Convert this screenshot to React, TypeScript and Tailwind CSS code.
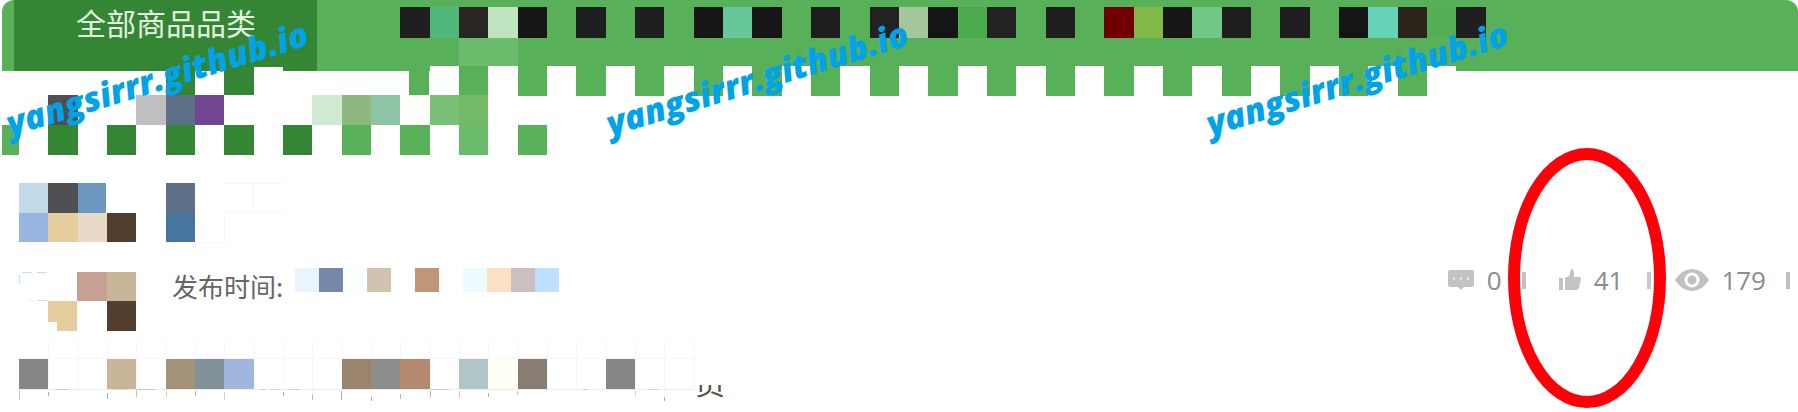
import React from "react";

type Cell = [x: number, y: number, w: number, h: number, fill: string];

const GREEN = "#58b058";
const DARK = "#348635";
const edge = (k: number) => Math.round(19 + k * 29.33);
const cell = (k: number, y: number, h: number, fill: string): Cell => [edge(k), y, edge(k + 1) - edge(k), h, fill];
const row = (y: number, h: number, items: [number, string][]) => items.map(([k, fill]) => cell(k, y, h, fill));

const fringe: Cell[] = [];
for (let k = 14; k <= 48; k++) {
  fringe.push(k % 2 ? cell(k, 66, 30, GREEN) : cell(k, 66, 30, "#ffffff"));
}

const headerCells: Cell[] = [
  ...row(7, 31, [
    [13, "#1f1f1f"], [14, "#50b87a"], [15, "#2a2722"], [16, "#bfe4bf"], [17, "#161616"], [19, "#1c1f20"],
    [21, "#1e2020"], [23, "#161616"], [24, "#67c79a"], [25, "#161616"], [27, "#1e1e1e"], [29, "#222222"],
    [30, "#a3c69c"], [31, "#151515"], [32, "#4cac4d"], [33, "#222222"], [35, "#1f1f1f"], [37, "#700000"],
    [38, "#81b848"], [39, "#161616"], [40, "#71c885"], [41, "#1e1e1e"], [43, "#1f1d1d"], [45, "#151515"],
    [46, "#66d2b8"], [47, "#2a241a"], [48, "#53ae56"], [49, "#1f1f1f"],
  ]),
  ...row(38, 28, [[15, "#6abb6c"], [16, "#6abb6c"]]),
  [409, 66, 20, 30, GREEN],
  ...fringe,
  ...row(66, 29, [[5, DARK], [7, DARK]]),
  cell(8, 67, 28, "#ffffff"),
  ...row(95, 30, [
    [1, "#505052"], [4, "#bfbfc1"], [5, "#5e7088"], [6, "#71458f"], [10, "#d0ebd1"], [11, "#8db880"],
    [12, "#8cc4a5"], [13, "#fefffa"], [14, "#7ac177"], [15, "#74b966"],
  ]),
  [2, 125, 17, 30, GREEN],
  ...row(125, 30, [
    [1, DARK], [3, DARK], [5, DARK], [7, DARK], [9, DARK], [11, GREEN], [13, GREEN], [15, "#6abb6c"], [17, GREEN],
  ]),
];

const titleCells: Cell[] = [
  [0, 0, 29, 30, "#c2d9e7"], [29, 0, 30, 30, "#505052"], [59, 0, 28, 30, "#6c98bf"], [147, 0, 29, 30, "#5e7088"],
  [0, 30, 29, 29, "#97b5df"], [29, 30, 30, 29, "#e5cd9e"], [59, 30, 29, 29, "#e9d9c6"], [88, 30, 29, 29, "#513e2f"],
  [147, 30, 29, 29, "#47759f"],
  [205, 0, 59, 1, "#f6f6f6"], [205, 29, 59, 1, "#f6f6f6"], [205, 30, 1, 29, "#f6f6f6"], [234, 0, 1, 29, "#f6f6f6"],
  [147, 59, 58, 1, "#f7f7f7"],
];

const authorCells: Cell[] = [
  [58, 0, 30, 29, "#c7a093"], [88, 0, 29, 29, "#c9b698"], [29, 29, 29, 21, "#e5cd9e"], [38, 50, 20, 9, "#e5cd9e"],
  [88, 29, 29, 30, "#513e2f"], [3, 0, 10, 1, "#b9edc2"], [18, 0, 10, 1, "#b9edc2"], [0, 3, 1, 9, "#b9edc2"],
  [18, 28, 10, 1, "#b9edc2"], [10, 28, 4, 1, "#dff5e3"],
];

const dateCells: Cell[] = [
  [0, 0, 24, 24, "#e9f4ff"], [24, 0, 24, 24, "#7888aa"], [48, 0, 24, 24, "#faffff"], [72, 0, 24, 24, "#d0c4b0"],
  [120, 0, 24, 24, "#bf9678"], [168, 0, 24, 24, "#edfbff"], [192, 0, 24, 24, "#fbe0c6"], [216, 0, 24, 24, "#cac0c0"],
  [240, 0, 24, 24, "#bfdfff"],
];

const gridLines: Cell[] = [[0, 17, 675, 1, "#f6f6f6"], [0, 48, 675, 1, "#eeeeee"]];
for (let k = 1; k <= 23; k++) gridLines.push([edge(k) - 19, 0, 1, 48, "#f6f6f6"]);

const ticks: Cell[] = [
  [0, 50, 1, 9, "#b5c4d8"], [29, 51, 1, 4, "#a8b4c4"], [88, 52, 1, 6, "#9bb0c8"], [117, 49, 1, 7, "#d8b8b8"],
  [147, 51, 1, 5, "#e5c99a"], [176, 50, 1, 5, "#b6bcc8"], [205, 51, 1, 8, "#e8cfa5"], [264, 51, 1, 4, "#b4acac"],
  [293, 53, 1, 6, "#d9b8a8"], [322, 50, 1, 9, "#b0a6bd"], [352, 56, 1, 4, "#b5ada0"], [381, 53, 1, 5, "#a8b8cc"],
  [411, 50, 1, 6, "#caa8a8"], [440, 50, 1, 7, "#e8c595"], [469, 52, 1, 4, "#b5aeb5"], [498, 50, 1, 4, "#a5c8e5"],
  [616, 50, 1, 6, "#bfe0f5"], [645, 56, 1, 4, "#b8b0a0"],
  [36, 48, 14, 1, "#cccccc"], [94, 48, 14, 1, "#d4d4d4"], [118, 48, 18, 1, "#c8c8c8"], [241, 48, 6, 1, "#cfcfcf"],
  [252, 48, 8, 1, "#d4d4d4"], [270, 48, 10, 1, "#cccccc"], [412, 48, 18, 1, "#cccccc"], [564, 48, 5, 1, "#d4d4d4"],
  [630, 48, 9, 1, "#d0d0d0"],
];

const bodyCells: Cell[] = [
  ...gridLines,
  ...ticks,
  ...row(18, 30, [
    [0, "#868686"], [3, "#c9b698"], [5, "#a39378"], [6, "#829099"], [7, "#a0b6df"], [11, "#9a846b"],
    [12, "#8d8d8d"], [13, "#b58870"], [15, "#b0c5c5"], [16, "#fffff7"], [17, "#887d72"], [20, "#868686"],
  ]).map(([x, y, w, h, f]): Cell => [x - 19, y, w, h, f]),
];

function Mosaic({ cells, width, height, className = "" }: { cells: Cell[]; width: number; height: number; className?: string }) {
  return (
    <svg aria-hidden="true" width={width} height={height} className={`block shrink-0 ${className}`}>
      {cells.map(([x, y, w, h, fill], i) => (
        <rect key={i} x={x} y={y} width={w} height={h} fill={fill} />
      ))}
    </svg>
  );
}

function CommentIcon() {
  return (
    <svg width="28" height="24" viewBox="0 0 28 24" aria-hidden="true">
      <path d="M3 2h22q2 0 2 2v13q0 2-2 2h-8l-3 3-3-3H3q-2 0-2-2V4q0-2 2-2z" fill="#c3c3c3" />
      <g fill="#e6e6e6">
        <rect x="6" y="9" width="2" height="3" />
        <rect x="13" y="9" width="2" height="3" />
        <rect x="20" y="9" width="2" height="3" />
      </g>
    </svg>
  );
}

function LikeIcon() {
  return (
    <svg width="24" height="24" viewBox="0 0 24 24" aria-hidden="true" fill="#c3c3c3">
      <path d="M1 10h4v12H1z" />
      <path d="M7 10l4-2 2-7q3 0 3 3v5h5q2 0 2 2l-2 9q-1 2-3 2H7z" />
    </svg>
  );
}

function EyeIcon() {
  return (
    <svg width="34" height="24" viewBox="0 0 34 24" aria-hidden="true">
      <path d="M0 12Q7 1 17 1t17 11Q27 23 17 23T0 12z" fill="#c0c0c0" />
      <circle cx="17" cy="12" r="6" fill="none" stroke="#fff" strokeWidth="3" />
    </svg>
  );
}

function Watermark() {
  return (
    <span className="flex h-[156px] w-[600px] shrink-0 items-center">
      <span className="-rotate-[17deg] text-[34px] leading-none font-extrabold whitespace-nowrap text-[#00a2e8] italic">
        yangsirrr.github.io
      </span>
    </span>
  );
}

export default function App() {
  return (
    <div className="relative overflow-hidden bg-white pb-4 pl-0.5 font-['Open_Sans','Noto_Sans_CJK_SC',sans-serif]">
      <header className="flex h-[71px] rounded-t-xl bg-[#58b058] pl-3">
        <a href="#all" className="flex w-[303px] items-start bg-[#348635] px-[62px] pt-1 text-[30px] leading-[36px] whitespace-nowrap text-[#e4f2e0] font-['Noto_Sans_CJK_SC',sans-serif]">
          全部商品品类
        </a>
      </header>
      <Mosaic cells={headerCells} width={1500} height={160} className="absolute top-0 left-0" />

      <main className="pl-[17px]">
        <div className="pt-28">
          <Mosaic cells={titleCells} width={270} height={60} />
        </div>
        <div className="flex h-[86px] items-start pt-[25px]">
          <Mosaic cells={authorCells} width={117} height={60} className="mt-1" />
          <span className="ml-9 text-[26px] leading-[36px] whitespace-nowrap text-[#666] font-['Noto_Sans_CJK_SC',sans-serif]">发布时间:</span>
          <Mosaic cells={dateCells} width={264} height={24} className="ml-3" />
          <ul className="ml-auto flex items-center pr-2 text-[26px] leading-[20px] text-[#8c8c8c]">
            <li className="flex items-center gap-3"><CommentIcon />0</li>
            <li className="ml-5 h-[17px] w-1 bg-[#c0c0c0]" />
            <li className="ml-8 flex items-center gap-3"><LikeIcon />41</li>
            <li className="ml-6 h-[17px] w-1 bg-[#c8c8c8]" />
            <li className="ml-6 flex items-center gap-3"><EyeIcon />179</li>
            <li className="ml-5 h-[17px] w-1 bg-[#c0c0c0]" />
          </ul>
        </div>
        <div className="flex items-start pt-3">
          <Mosaic cells={bodyCells} width={676} height={62} />
          <span className="mt-11 flex h-4 items-end overflow-hidden text-[30px] leading-[36px] text-[#555]">员</span>
        </div>
      </main>

      <svg aria-hidden="true" className="absolute top-[147px] right-[131px]" width="160" height="264" viewBox="0 0 160 264">
        <ellipse cx="80" cy="131" rx="73" ry="124" fill="none" stroke="#ff0008" strokeWidth="12" />
      </svg>
      <div className="pointer-events-none absolute top-0 left-0 flex">
        <Watermark />
        <Watermark />
        <Watermark />
      </div>
    </div>
  );
}
